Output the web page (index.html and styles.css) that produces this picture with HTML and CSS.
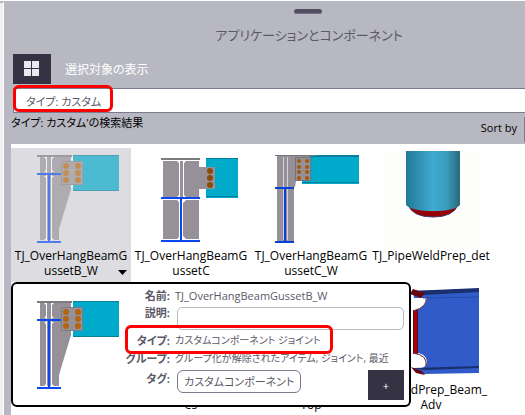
FILE: index.html
```html
<!DOCTYPE html>
<html lang="ja">
<head>
<meta charset="utf-8">
<title>アプリケーションとコンポーネント</title>
<link rel="stylesheet" href="styles.css">
</head>
<body>
<svg class="defs" aria-hidden="true">
  <defs>
    <g id="gusset-b">
      <path fill="#969198" d="M5 3h31v33L24 76v11H5z"/>
      <path fill="#fff" d="M11 4h1v82h-1zM16 4h1v82h-1z"/>
      <path fill="#fff" d="M9 4h3v3zM19 4h-3v3zM9 19h3v-3zM19 19h-3v-3zM9 87h3v-3zM19 87h-3v-3zM9 23h3v3zM19 23h-3v3z"/>
      <path fill="#7d7a80" d="M2 2h35v2H2z"/>
      <path fill="#0a48f0" d="M2 20h24v2H2zM2 88h24v2H2zM13 22h2v66h-2z"/>
      <path fill="#fff" d="M36 4h2v31h-2z"/>
      <path fill="#00aacb" d="M38 2h46v36H38z"/>
      <path fill="#087f9c" d="M38 2h46v1H38zM38 37h46v1H38z"/>
      <path fill="#969198" stroke="#807c83" d="M26.500 8.500h21v23h-21z"/>
      <g fill="#b5650f"><circle cx="31" cy="13" r="3"/><circle cx="43" cy="13" r="3"/><circle cx="31" cy="20" r="3"/><circle cx="43" cy="20" r="3"/><circle cx="31" cy="27" r="3"/><circle cx="43" cy="27" r="3"/></g>
    </g>
  </defs>
</svg>
<div class="app">
  <div class="edge"></div>
  <main class="panel">
    <div class="grip"></div>
    <h1>アプリケーションとコンポーネント</h1>
    <div class="toolbar">
      <button class="dark" aria-label="一覧"><svg width="16" height="16" viewBox="0 0 16 16" fill="#e8e8ee"><path d="M0 0h7v7H0zM8 0h7v7H8zM0 8h7v7H0zM8 8h7v7H8z"/></svg></button>
      <span>選択対象の表示</span>
    </div>
    <div class="search">
      <input type="text" aria-label="検索" value="タイプ: カスタム">
      <div class="mark mark-search"></div>
    </div>
    <div class="results">
      <p>タイプ: カスタム'の検索結果</p>
      <div class="sort"><label for="sort">Sort by</label><select id="sort"></select></div>
    </div>
    <div class="catalog">
      <div class="grid">
        <div class="item selected">
          <svg class="faded" viewBox="0 0 96 96"><use href="#gusset-b" transform="translate(12 -1)"/></svg>
          <p>TJ_OverHangBeamG<br>ussetB_W</p>
          <svg class="caret" viewBox="0 0 9 5"><path d="M0 0h9L4.500 5z"/></svg>
        </div>
        <div class="item">
          <svg viewBox="0 0 96 96">
            <path fill="#969198" d="M20 7h36v36H20zM20 46h36v39H20z"/>
            <path fill="#fff" d="M36 7h1v36h-1zM40 7h1v36h-1zM36 46h1v39h-1zM39 46h1v39h-1z"/>
            <path fill="#fff" d="M34 7h3v3zM43 7h-3v3zM34 43h3v-3zM43 43h-3v-3zM34 46h3v3zM43 46h-3v3zM34 85h3v-3zM43 85h-3v-3z"/>
            <path fill="#7d7a80" d="M18 4h39v2H18z"/>
            <path fill="#00aacb" d="M63 4h32v40H63z"/>
            <path fill="#087f9c" d="M63 4h32v1H63zM63 42h32v1H63z"/>
            <path fill="#969198" d="M56 13h16v22H56z"/>
            <path fill="#0a48f0" d="M18 43h39v2H18zM18 86h39v2H18zM37 45h2v42h-2z"/>
            <g fill="#8c4a08"><circle cx="67" cy="17" r="3"/><circle cx="67" cy="24" r="3"/><circle cx="67" cy="31" r="3"/></g>
          </svg>
          <p>TJ_OverHangBeamG<br>ussetC</p>
        </div>
        <div class="item">
          <svg viewBox="0 0 96 96">
            <path fill="#00aacb" d="M39 1h57v29H39z"/>
            <path fill="#087f9c" d="M39 1h57v2H39zM39 28h57v1H39z"/>
            <path fill="#969198" d="M14 2h33v25H33l-1 6h-1v54H14z"/>
            <path stroke="#d4d1d6" d="M20.500 3v83M24.500 3v83"/>
            <path stroke="#77737a" fill="none" d="M12 1.500h42M32.500 3.500h15v23h-15z"/>
            <path fill="#0642da" d="M12 33h19v2H12zM12 87h19v2H12zM21 35h2v52h-2z"/>
            <g fill="#a95808"><circle cx="36" cy="7" r="2"/><circle cx="44" cy="7" r="2"/><circle cx="36" cy="13" r="2"/><circle cx="44" cy="13" r="2"/><circle cx="36" cy="18" r="2"/><circle cx="44" cy="18" r="2"/><circle cx="36" cy="24" r="2"/><circle cx="44" cy="24" r="2"/></g>
          </svg>
          <p>TJ_OverHangBeamG<br>ussetC_W</p>
        </div>
        <div class="item">
          <svg viewBox="0 0 96 96">
            <defs><linearGradient id="pipe"><stop stop-color="#237995"/><stop offset=".5" stop-color="#40aad1"/><stop offset=".75" stop-color="#389dbf"/><stop offset="1" stop-color="#296877"/></linearGradient></defs>
            <path fill="#fdfefb" d="M0-3h96v99H0z"/>
            <path fill="#960005" stroke="#423765" d="M25 51q5 12 25 12t25-12z"/>
            <path fill="url(#pipe)" d="M23-3h54v54q-6 6-27 6t-27-6z"/>
          </svg>
          <p>TJ_PipeWeldPrep_det</p>
        </div>
        <div class="item"></div>
        <div class="item"><svg viewBox="0 0 96 96"></svg><p>TJ_OverHangPlat<br>es</p></div>
        <div class="item"><svg viewBox="0 0 96 96"></svg><p>TJ_OverHangBeam<br>Top</p></div>
        <div class="item">
          <svg viewBox="0 0 96 96">
            <path fill="#315bc9" d="M30 3l66-2v84l-55 1-12-6h10q5-2 5-7-1-8-14-9V23q13-3 14-13H31z"/>
            <path fill="#19306e" d="M28 3l68-3v4l-56 3zM30 80l66-2v2l-54 2z"/>
            <path stroke="#2148aa" d="M40 10l56-1"/>
            <path fill="#b10008" stroke="#50131f" d="M30.500 22.500h4v43h-4z"/>
            <path fill="#650711" d="M30 1l12 4-4 5-11-4zM28 79l11 4 3 4-9-2z"/>
            <path fill="#fff" stroke="#651d2c" d="M43 9q2 10-13 14M30 65q15 2 13 13"/>
          </svg>
          <p>TJ_WeldPrep_Beam_<br>Adv</p>
        </div>
      </div>
      <section class="details">
        <svg class="preview" viewBox="0 0 96 96"><use href="#gusset-b" transform="translate(12 2)"/></svg>
        <div class="fields">
          <b>名前:</b><span>TJ_OverHangBeamGussetB_W</span>
          <label for="desc">説明:</label><input id="desc" type="text">
          <b>タイプ:</b><span class="kinds">カスタムコンポーネント ジョイント</span>
          <b>グループ:</b><span class="kinds">グループ化が解除されたアイテム, ジョイント, 最近</span>
          <b>タグ:</b><div class="tags"><button class="tag">カスタムコンポーネント</button><button class="dark add">+</button></div>
        </div>
        <div class="mark mark-type"></div>
      </section>
    </div>
  </main>
</div>
</body>
</html>
```
FILE: styles.css
```css
* { box-sizing: border-box; }
body {
  margin: 0;
  overflow: hidden;
  font: 12px/15px "Open Sans", "Noto Sans CJK JP", sans-serif;
  font-feature-settings: "palt";
  color: #000;
  background: #fff;
}
h1, p { margin: 0; font-weight: 400; }
button, input, select { font: inherit; font-feature-settings: inherit; color: inherit; }
.defs { position: absolute; width: 0; height: 0; }
.app { display: flex; min-height: 100vh; padding-top: 1px; }
.edge { width: 4px; background: #f0f0f2; border-top: 2px solid #b8b8bc; border-right: 1px solid #fff; }
.panel { flex: 1; min-width: 0; height: calc(100vh - 1px); padding: 8px 0 0 7px; background: #b8b8c2; display: flex; flex-direction: column; }
.grip { flex: none; width: 28px; height: 5px; margin-left: 283px; border-radius: 3px; background: #504e60; border-bottom: 1px solid #706e80; }
h1 { margin: 9px 0 7px; padding-left: 82px; text-align: center; font-size: 13px; line-height: 24px; color: #5b5968; }
.toolbar { display: flex; align-items: center; gap: 14px; padding-left: 2px; color: #fff; }
.dark { display: flex; align-items: center; justify-content: center; width: 38px; height: 30px; padding: 0; border: 0; background: #353244; color: #fff; }
.search { position: relative; margin: 4px 0 0 2px; }
.search input { display: block; width: 100%; height: 25px; padding: 0 12px; border: 1px solid #7c7a8b; border-right: 0; background: #fff; color: #5b5968; font-size: 11px; }
.mark { position: absolute; border: 3px solid #f00; border-radius: 6px; }
.mark-search { left: 0; top: -3px; width: 100px; height: 27px; }
.results { display: flex; justify-content: space-between; height: 31px; font-size: 11px; line-height: 20px; }
.sort { display: flex; gap: 7px; padding-top: 4px; line-height: 22px; }
.sort select { width: 1px; height: 25px; padding: 0; border: 0; border-radius: 0; background: #7c7a8b; appearance: none; }
.catalog { position: relative; flex: 1; min-height: 0; padding-top: 4px; background: #fff; }
.grid { display: grid; grid-template-columns: repeat(auto-fill, 120px); grid-auto-rows: 134px; height: 100%; overflow: hidden; }
.item { position: relative; padding-top: 6px; text-align: center; white-space: nowrap; }
.item > svg:first-child { display: block; width: 96px; height: 96px; margin: 0 auto; overflow: visible; }
.item p { line-height: 15px; margin-top: -2px; }
.selected { background: #dcdce1; }
.faded { opacity: .65; }
.caret { position: absolute; right: 4px; bottom: 7px; width: 9px; height: 5px; }
.details { position: absolute; left: 0; top: 138px; width: 400px; display: flex; padding: 3px 5px 5px 10px; border: 2px solid #000; border-radius: 6px; background: #fff; color: #5b5968; font-size: 11px; }
.preview { flex: none; width: 96px; height: 96px; margin-top: 10px; }
.fields { flex: 1; min-width: 0; display: grid; grid-template-columns: 51px minmax(0, 1fr); column-gap: 5px; grid-template-rows: 17px 28px 18px 20px 30px; white-space: nowrap; line-height: 17px; }
.fields b, .fields label { justify-self: end; font-weight: 700; }
.fields input { height: 23px; margin: 3px 0 0 2px; border: 1px solid #b8b8c2; border-radius: 5px; background: #fff; }
.kinds { font-size: 10px; }
.tags { display: flex; align-items: flex-start; justify-content: space-between; padding-left: 2px; }
.tag { height: 23px; padding: 0 6px; border: 1px solid #7c7a8b; border-radius: 6px; background: #fff; }
.add { width: 36px; }
.mark-type { left: 112px; top: 41px; width: 208px; height: 29px; }
```
